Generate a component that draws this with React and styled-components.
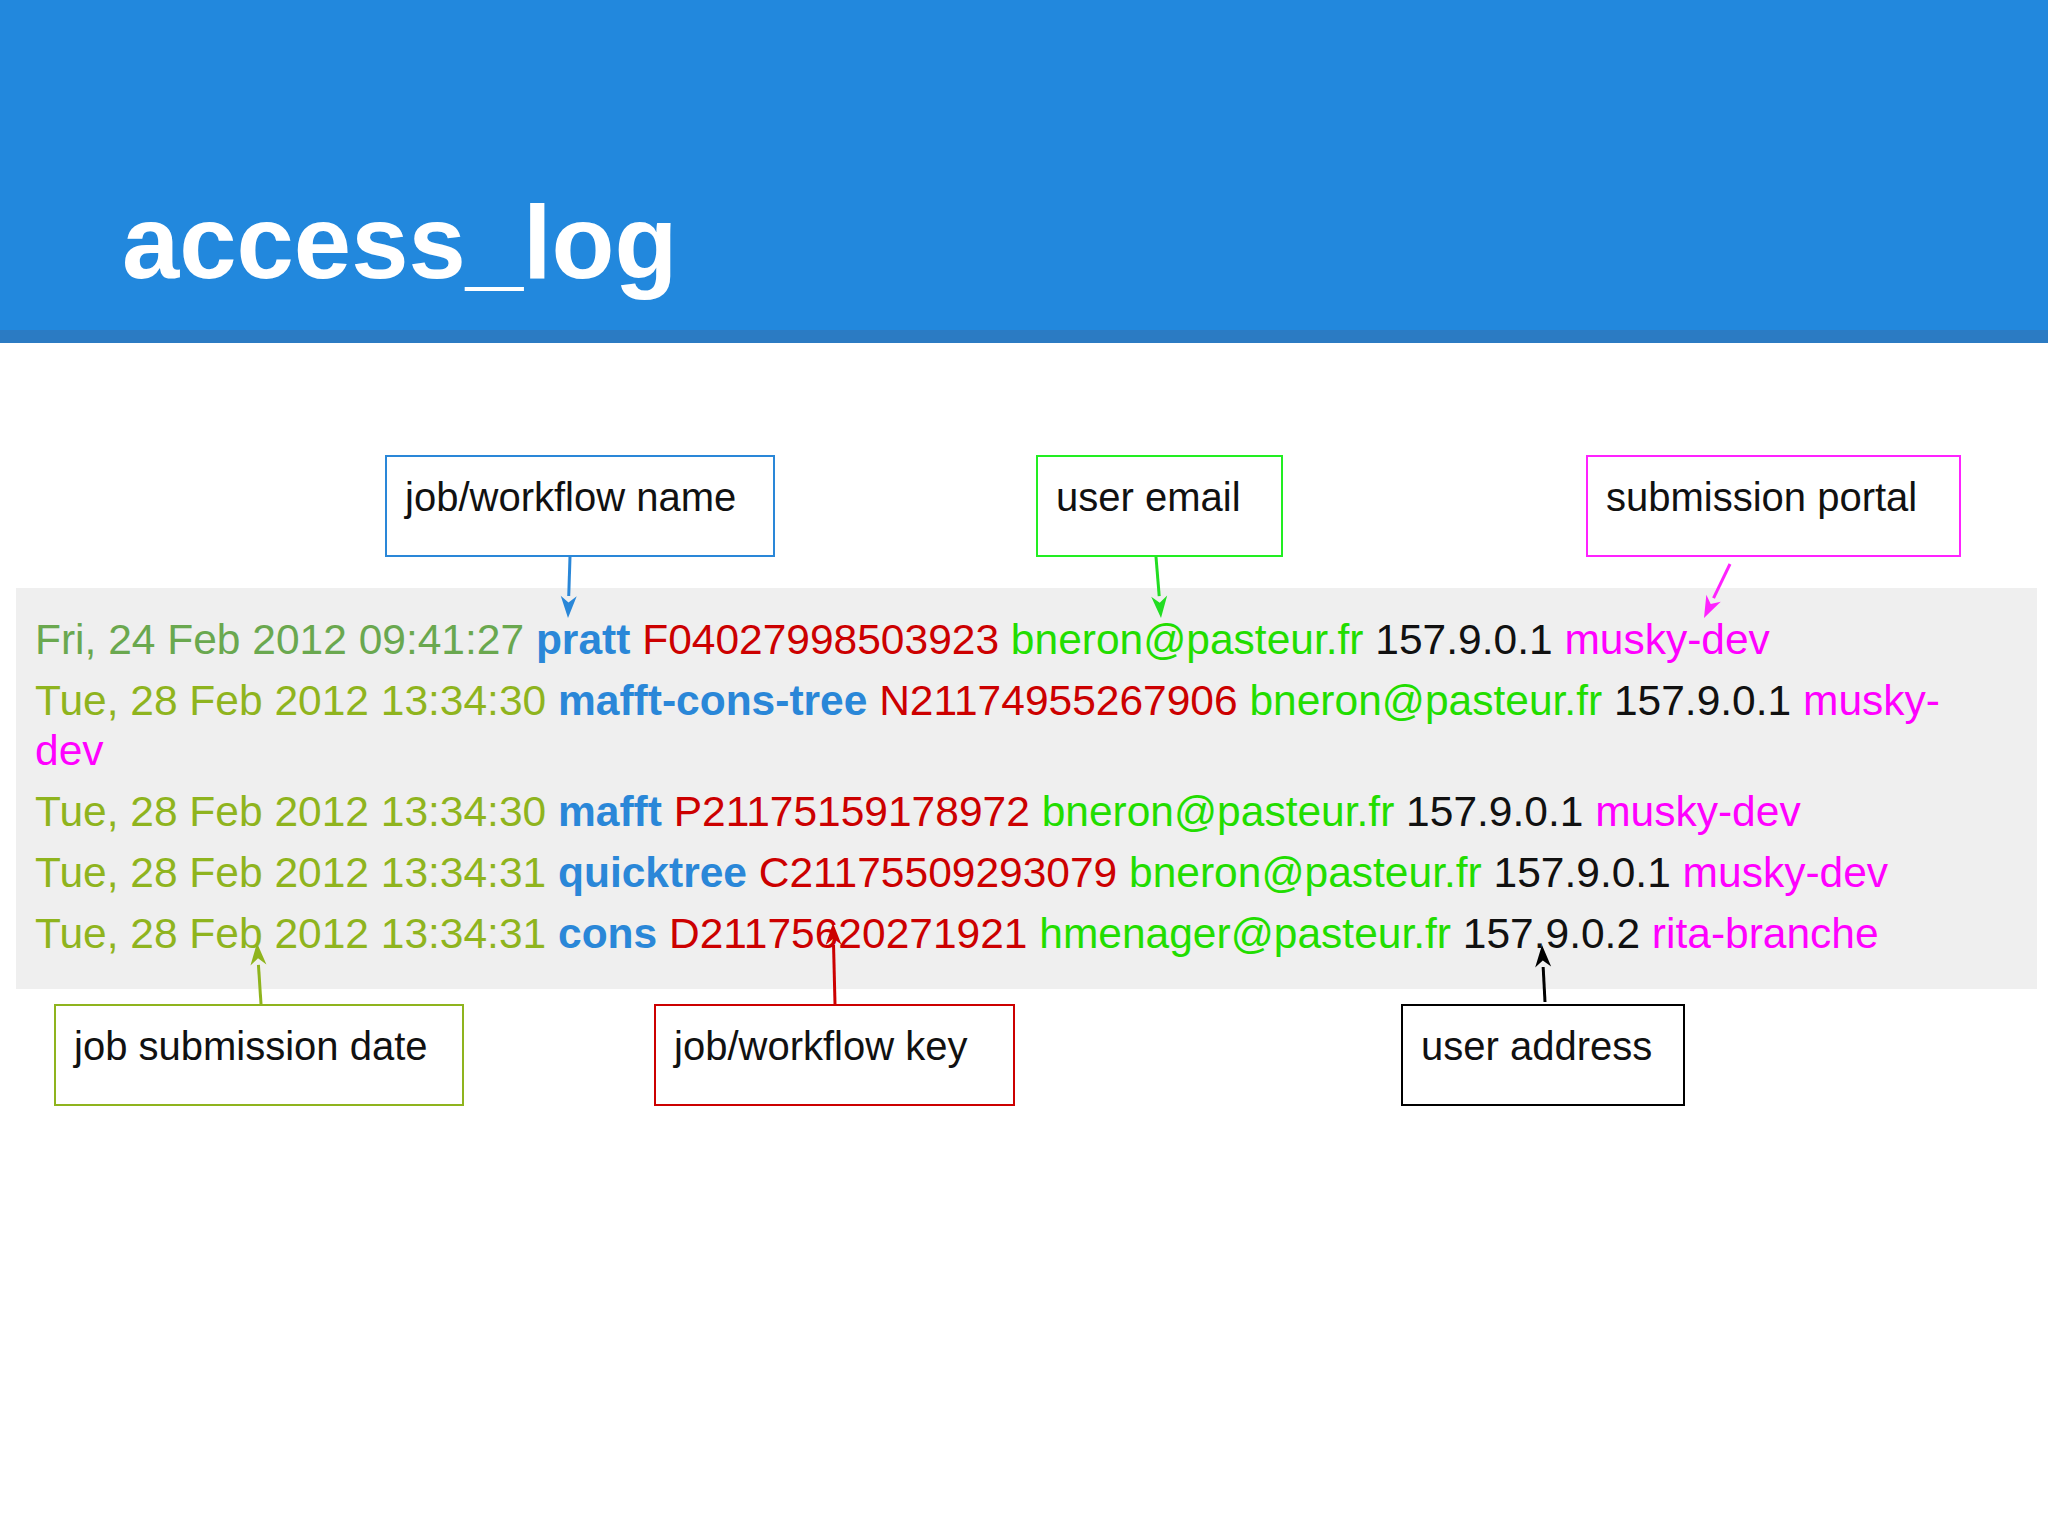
import React from "react"
import styled, { createGlobalStyle } from "styled-components"

const Global = createGlobalStyle`
    body {
        margin: 0;
        background: #fff;
        font-family: "Liberation Sans", Arial, sans-serif;
    }
`

const Page = styled.div`
    position: relative;
    width: 2048px;
    height: 1536px;
    overflow: hidden;
`

const Header = styled.header`
    height: 330px;
    background: #2288dd;
    border-bottom: 13px solid #2b7bc3;
    box-sizing: content-box;
    display: flex;
    align-items: flex-end;
    padding-left: 122px;

    h1 {
        margin: 0 0 36px 0;
        color: #fff;
        font-size: 103px;
        font-weight: 700;
        line-height: 1;
    }
`

const BoxRow = styled.div`
    display: flex;
    height: 102px;
    margin-top: ${(p) => p.$top}px;
`

const Label = styled.div`
    box-sizing: border-box;
    margin-left: ${(p) => p.$left}px;
    width: ${(p) => p.$width}px;
    height: 102px;
    border: 2px solid ${(p) => p.$color};
    padding: 18px 0 0 18px;
    font-size: 40px;
    color: #111;
    background: #fff;
`

const Band = styled.div`
    margin: 31px 11px 0 16px;
    background: #efefef;
    height: 401px;
    box-sizing: border-box;
    padding: 27px 70px 0 19px;
    display: flex;
    flex-direction: column;
    gap: 11px;
`

const Row = styled.div`
    font-size: 42.5px;
    line-height: 50px;
`

const Seg = styled.span`
    color: ${(p) => p.$color};
    font-weight: ${(p) => (p.$bold ? 700 : 400)};
`

const Overlay = styled.svg`
    position: absolute;
    left: 0;
    top: 0;
    pointer-events: none;
`

const rows = [
    ["Fri, 24 Feb 2012 09:41:27", "pratt", "F04027998503923", "bneron@pasteur.fr", "157.9.0.1", "musky-dev", "#6aa84f"],
    ["Tue, 28 Feb 2012 13:34:30", "mafft-cons-tree", "N21174955267906", "bneron@pasteur.fr", "157.9.0.1", "musky-dev"],
    ["Tue, 28 Feb 2012 13:34:30", "mafft", "P21175159178972", "bneron@pasteur.fr", "157.9.0.1", "musky-dev"],
    ["Tue, 28 Feb 2012 13:34:31", "quicktree", "C21175509293079", "bneron@pasteur.fr", "157.9.0.1", "musky-dev"],
    ["Tue, 28 Feb 2012 13:34:31", "cons", "D21175620271921", "hmenager@pasteur.fr", "157.9.0.2", "rita-branche"],
]

const arrows = [
    [570, 557, 568, 618, "#2a87d8"],
    [1156, 557, 1161, 618, "#22dd22"],
    [1730, 564, 1704, 618, "#ff22ff"],
    [261, 1004, 257, 943, "#8fb41e"],
    [835, 1004, 833, 923, "#cc0000"],
    [1545, 1002, 1542, 945, "#000"],
]

const Arrow = ({ x1, y1, x2, y2, color }) => {
    const a = Math.atan2(y2 - y1, x2 - x1)
    const l = 22, w = 8
    const bx = x2 - l * Math.cos(a), by = y2 - l * Math.sin(a)
    const px = -Math.sin(a) * w, py = Math.cos(a) * w
    return (
        <g>
            <line x1={x1} y1={y1} x2={bx} y2={by} stroke={color} strokeWidth="3" />
            <polygon points={`${x2},${y2} ${bx + px},${by + py} ${bx + l * 0.3 * Math.cos(a)},${by + l * 0.3 * Math.sin(a)} ${bx - px},${by - py}`} fill={color} />
        </g>
    )
}

const App = () => (
    <Page>
        <Global />
        <Header>
            <h1>access_log</h1>
        </Header>
        <BoxRow $top={112}>
            <Label $left={385} $width={390} $color="#2a87d8">job/workflow name</Label>
            <Label $left={261} $width={247} $color="#22ee22">user email</Label>
            <Label $left={303} $width={375} $color="#ff22ff">submission portal</Label>
        </BoxRow>
        <Band>
            {rows.map((r, i) => (
                <Row key={i}>
                    <Seg $color={r[6] || "#8fb41e"}>{r[0]}</Seg>{" "}
                    <Seg $color="#2a87d8" $bold>{r[1]}</Seg>{" "}
                    <Seg $color="#cc0000">{r[2]}</Seg>{" "}
                    <Seg $color="#22dd00">{r[3]}</Seg>{" "}
                    <Seg $color="#111">{r[4]}</Seg>{" "}
                    <Seg $color="#ff00ff">{r[5]}</Seg>
                </Row>
            ))}
        </Band>
        <BoxRow $top={15}>
            <Label $left={54} $width={410} $color="#8fb41e">job submission date</Label>
            <Label $left={190} $width={361} $color="#cc0000">job/workflow key</Label>
            <Label $left={386} $width={284} $color="#000">user address</Label>
        </BoxRow>
        <Overlay width="2048" height="1536">
            {arrows.map(([x1, y1, x2, y2, c], i) => (
                <Arrow key={i} x1={x1} y1={y1} x2={x2} y2={y2} color={c} />
            ))}
        </Overlay>
    </Page>
)

export default App
